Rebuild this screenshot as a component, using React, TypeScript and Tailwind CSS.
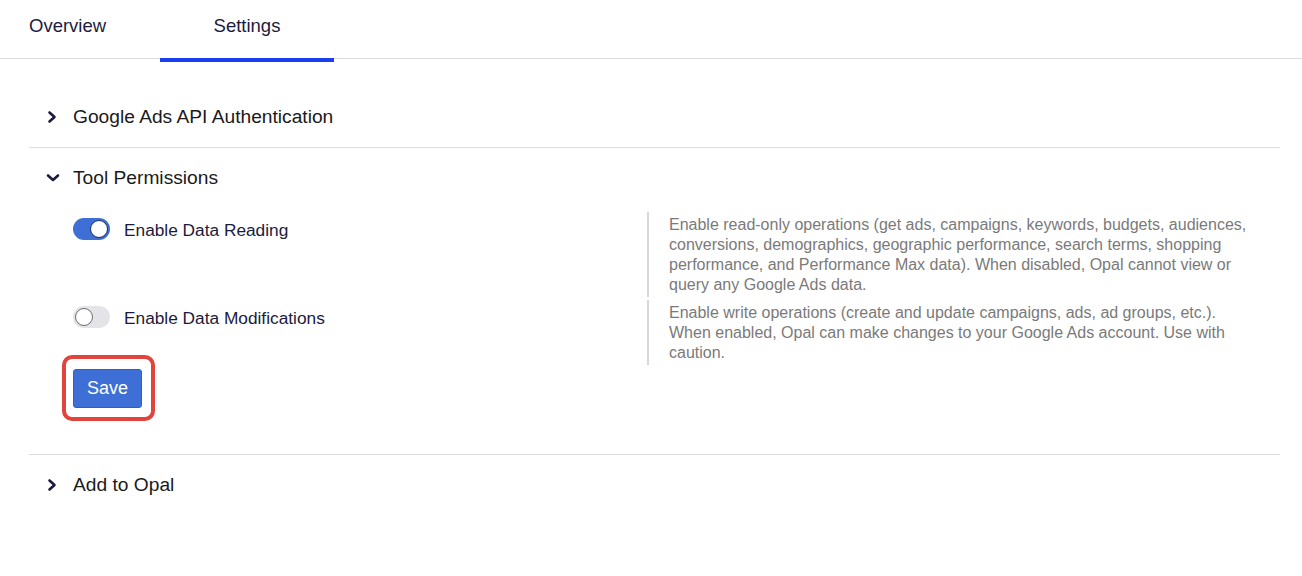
import React, { useState } from "react";

const ChevronRight = () => (
  <svg width="12" height="14" viewBox="0 0 12 14" className="shrink-0">
    <path d="M3.5 2.5 L8.5 7 L3.5 11.5" fill="none" stroke="#1c1b3d" strokeWidth="2.6" strokeLinecap="round" strokeLinejoin="round" />
  </svg>
);

const ChevronDown = () => (
  <svg width="14" height="12" viewBox="0 0 14 12" className="shrink-0">
    <path d="M2 3.5 L7 8 L12 3.5" fill="none" stroke="#1c1b3d" strokeWidth="2.6" strokeLinecap="round" strokeLinejoin="round" />
  </svg>
);

const Toggle = ({ on, onClick }: { on: boolean; onClick: () => void }) => (
  <button
    onClick={onClick}
    className={`flex h-[22px] w-[37px] shrink-0 items-center rounded-full px-[2px] ${
      on ? "justify-end bg-[#3d6fd6]" : "justify-start bg-[#e4e4e8]"
    }`}
  >
    <span
      className={`block h-[18px] w-[18px] rounded-full border-[1.5px] bg-white ${
        on ? "border-[#1c2a55]" : "border-[#6b6b70]"
      }`}
    />
  </button>
);

const SectionHeader = ({ title, open }: { title: string; open?: boolean }) => (
  <div className="flex h-[60px] items-center pl-[17px]">
    <span className="flex w-[27px] items-center">{open ? <ChevronDown /> : <ChevronRight />}</span>
    <span className="mt-[1px] text-[19.2px] text-[#1a1a1a]">{title}</span>
  </div>
);

const permissions = [
  {
    label: "Enable Data Reading",
    desc: "Enable read-only operations (get ads, campaigns, keywords, budgets, audiences, conversions, demographics, geographic performance, search terms, shopping performance, and Performance Max data). When disabled, Opal cannot view or query any Google Ads data.",
    on: true,
  },
  {
    label: "Enable Data Modifications",
    desc: "Enable write operations (create and update campaigns, ads, ad groups, etc.). When enabled, Opal can make changes to your Google Ads account. Use with caution.",
    on: false,
  },
];

export default function App() {
  const [toggles, setToggles] = useState(permissions.map((p) => p.on));

  return (
    <div className="min-h-[576px] w-full bg-white" style={{ fontFamily: '"Liberation Sans", Arial, sans-serif' }}>
      {/* tabs */}
      <div className="flex h-[59px] border-b border-[#dcdcdc]">
        <div className="flex w-[160px] items-center pb-[6px] pl-[29px] text-[18.5px] text-[#1c1b3d]">Overview</div>
        <div className="relative flex w-[174px] items-center justify-center pb-[6px] text-[18.5px] text-[#1c1b3d]">
          Settings
          <span className="absolute -bottom-[4px] left-0 h-[4px] w-full bg-[#1a3ef0]" />
        </div>
      </div>

      <div className="ml-[29px] mr-[22px] pt-[28px]">
        <div className="border-b border-[#dcdcdc]">
          <SectionHeader title="Google Ads API Authentication" />
        </div>

        <div className="border-b border-[#dcdcdc] pb-[46px]">
          <SectionHeader title="Tool Permissions" open />
          <div className="flex flex-col gap-[3px] pt-[4px]">
            {permissions.map((p, i) => (
              <div key={p.label} className="flex">
                <div className="flex w-[618px] items-start gap-[14px] pl-[44px] pt-[6px]">
                  <Toggle
                    on={toggles[i]}
                    onClick={() => setToggles((t) => t.map((v, j) => (j === i ? !v : v)))}
                  />
                  <span className="mt-[1px] text-[17.3px] leading-[22px] text-[#1c1b3d]">{p.label}</span>
                </div>
                <div className="flex-1 border-l-2 border-[#d8d8d8] pb-[2px] pl-[20px] pr-[25px] pt-[3px] text-[16px] leading-[20px] text-[#7a7a7a]">
                  {p.desc}
                </div>
              </div>
            ))}
          </div>
          <div className="pl-[44px] pt-[4px]">
            <div className="relative inline-block">
              <button className="h-[39px] w-[69px] rounded-[3px] border border-[#2f5fc4] bg-[#3d6fd6] text-[18px] text-white">
                Save
              </button>
              <span className="pointer-events-none absolute -bottom-[13px] -left-[11px] -right-[13px] -top-[14px] rounded-[10px] border-[4px] border-[#e0443c]" />
            </div>
          </div>
        </div>

        <SectionHeader title="Add to Opal" />
      </div>
    </div>
  );
}
